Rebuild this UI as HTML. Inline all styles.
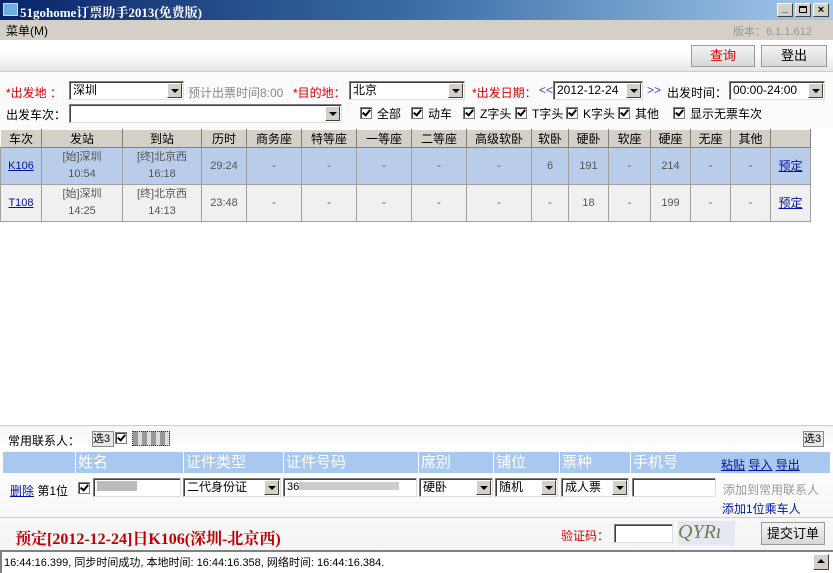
<!DOCTYPE html>
<html><head><meta charset="utf-8"><style>
*{box-sizing:border-box;margin:0;padding:0}
body{width:833px;height:573px;overflow:hidden;position:relative;background:#fff;font:12px "Liberation Sans","Noto Sans CJK SC",sans-serif;color:#000}
.a{position:absolute;white-space:nowrap}
.red{color:#d40000}
.combo{position:absolute;height:19px;background:#fff;border:1px solid #7f7f7f;border-right-color:#ddd;border-bottom-color:#ddd;box-shadow:inset 1px 1px 0 #404040;padding:1px 3px;font-size:12px;line-height:15px}
.combo .b{position:absolute;right:1px;top:1px;width:15px;height:15px;background:#d4d0c8;border:1px solid;border-color:#fff #404040 #404040 #fff}
.combo .b:after{content:"";position:absolute;left:3px;top:5px;border:4px solid transparent;border-top:4px solid #000;border-bottom:0}
.cb{position:absolute;width:12px;height:12px;border:1px solid #808080;background:#fff;box-shadow:inset 1px 1px 0 #404040}
.cb:after{content:"";position:absolute;left:3px;top:0px;width:3px;height:6px;border:solid #000;border-width:0 2px 2px 0;transform:rotate(40deg)}
.btn{position:absolute;background:linear-gradient(#f4f4f4,#d8d8d8);border:1px solid #9a9a9a;text-align:center;font-size:13px}
table{border-collapse:collapse;position:absolute;left:0;top:129px;table-layout:fixed;width:833px}
th{background:#d4d0c8;font-weight:normal;height:17px;border:1px solid;border-color:#fff #808080 #808080 #fff;font-size:12px;padding:0}
td{border:1px solid #a0a0a0;text-align:center;color:#555;font-size:11px;height:37px;line-height:17px;padding:0}
tr.s td{background:#b9cdeb}
tr.n td{background:#f0f0f0}
td.e{background:#fff!important;border:0}
a,.lk{color:#00159a;text-decoration:underline}
.hb{position:absolute;top:452px;height:21px;background:#a9c8ef;color:#fff;font-size:15px;line-height:21px;border-left:1px solid #fff;padding-left:2px}
</style></head><body>
<div class="a" style="left:0;top:0;width:833px;height:20px;background:linear-gradient(90deg,#0a246a,#3a6ea5 50%,#a6caf0)"></div>
<div class="a" style="left:3px;top:3px;width:15px;height:13px;background:#6ab0e0;border:1px solid #cde"></div>
<div class="a" style="left:20px;top:2px;color:#fff;font:bold 13px 'Liberation Serif','Noto Serif CJK SC',serif">51gohome订票助手2013(免费版)</div>
<div class="a" style="left:777px;top:3px;width:16px;height:14px;background:#d4d0c8;border:1px solid;border-color:#fff #404040 #404040 #fff;font-size:10px;line-height:10px;text-align:center;font-weight:bold">_</div>
<div class="a" style="left:795px;top:3px;width:16px;height:14px;background:#d4d0c8;border:1px solid;border-color:#fff #404040 #404040 #fff"><div style="margin:2px 3px;width:8px;height:7px;border:1px solid #000;border-top-width:2px"></div></div>
<div class="a" style="left:813px;top:3px;width:16px;height:14px;background:#d4d0c8;border:1px solid;border-color:#fff #404040 #404040 #fff;font:bold 11px/12px 'Liberation Sans';text-align:center">×</div>
<div class="a" style="left:0;top:20px;width:833px;height:20px;background:#d4d0c8"></div>
<div class="a" style="left:6px;top:22px;font-size:12px">菜单(M)</div>
<div class="a" style="left:733px;top:23px;color:#999;font-size:11px">版本：6.1.1.612</div>
<div class="a" style="left:0;top:40px;width:833px;height:32px;background:linear-gradient(#fff,#fff 40%,#e6e6e6);border-bottom:1px solid #ccc"></div>
<div class="btn" style="left:691px;top:45px;width:64px;height:22px;line-height:20px;color:#d40000">查询</div>
<div class="btn" style="left:761px;top:45px;width:66px;height:22px;line-height:20px">登出</div>
<div class="a" style="left:0;top:73px;width:833px;height:56px;background:#fbfbfb"></div>
<div class="a red" style="left:6px;top:84px">*出发地 ：</div>
<div class="combo" style="left:69px;top:81px;width:115px">深圳<div class="b"></div></div>
<div class="a" style="left:188px;top:84px;color:#888;font-size:12px">预计出票时间8:00</div>
<div class="a red" style="left:293px;top:84px">*目的地：</div>
<div class="combo" style="left:349px;top:81px;width:116px">北京<div class="b"></div></div>
<div class="a red" style="left:472px;top:84px">*出发日期：</div>
<div class="a" style="left:539px;top:83px;color:#3050c0">&lt;&lt;</div>
<div class="combo" style="left:553px;top:81px;width:90px">2012-12-24<div class="b"></div></div>
<div class="a" style="left:647px;top:83px;color:#3050c0">&gt;&gt;</div>
<div class="a" style="left:667px;top:84px">出发时间：</div>
<div class="combo" style="left:729px;top:81px;width:96px">00:00-24:00<div class="b"></div></div>
<div class="a" style="left:6px;top:106px">出发车次：</div>
<div class="combo" style="left:69px;top:104px;width:273px"><div class="b"></div></div>
<div class="cb" style="left:360px;top:107px"></div><div class="a" style="left:377px;top:105px">全部</div>
<div class="cb" style="left:411px;top:107px"></div><div class="a" style="left:428px;top:105px">动车</div>
<div class="cb" style="left:463px;top:107px"></div><div class="a" style="left:480px;top:105px">Z字头</div>
<div class="cb" style="left:515px;top:107px"></div><div class="a" style="left:532px;top:105px">T字头</div>
<div class="cb" style="left:566px;top:107px"></div><div class="a" style="left:583px;top:105px">K字头</div>
<div class="cb" style="left:618px;top:107px"></div><div class="a" style="left:635px;top:105px">其他</div>
<div class="cb" style="left:673px;top:107px"></div><div class="a" style="left:690px;top:105px">显示无票车次</div>
<table>
<colgroup><col style="width:41px"><col style="width:81px"><col style="width:79px"><col style="width:45px"><col style="width:55px"><col style="width:55px"><col style="width:55px"><col style="width:55px"><col style="width:65px"><col style="width:37px"><col style="width:40px"><col style="width:42px"><col style="width:40px"><col style="width:40px"><col style="width:40px"><col style="width:40px"><col style="width:23px"></colgroup>
<tr><th>车次</th><th>发站</th><th>到站</th><th>历时</th><th>商务座</th><th>特等座</th><th>一等座</th><th>二等座</th><th>高级软卧</th><th>软卧</th><th>硬卧</th><th>软座</th><th>硬座</th><th>无座</th><th>其他</th><th></th><th style="border:0;background:#fff"></th></tr>
<tr class="s"><td><a>K106</a></td><td>[始]深圳<br>10:54</td><td>[终]北京西<br>16:18</td><td>29:24</td><td>-</td><td>-</td><td>-</td><td>-</td><td>-</td><td>6</td><td>191</td><td>-</td><td>214</td><td>-</td><td>-</td><td style="font-size:12px"><a>预定</a></td><td class="e"></td></tr>
<tr class="n"><td><a>T108</a></td><td>[始]深圳<br>14:25</td><td>[终]北京西<br>14:13</td><td>23:48</td><td>-</td><td>-</td><td>-</td><td>-</td><td>-</td><td>-</td><td>18</td><td>-</td><td>199</td><td>-</td><td>-</td><td style="font-size:12px"><a>预定</a></td><td class="e"></td></tr>
</table>
<div class="a" style="left:0;top:425px;width:833px;height:125px;background:linear-gradient(#f6f6f6,#fff 20%,#f4f4f4);border-top:1px solid #ccc"></div>
<div class="a" style="left:8px;top:432px;font-size:12px">常用联系人：</div>
<div class="a" style="left:92px;top:431px;width:22px;height:16px;background:#e8e8e8;border:1px solid #888;font-size:11px;line-height:14px">选3</div>
<div class="cb" style="left:115px;top:432px"></div>
<div class="a" style="left:132px;top:431px;width:38px;height:15px;border:1px dotted #333;background:repeating-linear-gradient(90deg,#999 0 5px,#ddd 5px 9px)"></div>
<div class="a" style="left:803px;top:431px;width:21px;height:16px;background:#e8e8e8;border:1px solid #888;font-size:11px;line-height:14px">选3</div>
<div class="a" style="left:3px;top:452px;width:827px;height:21px;background:#a9c8ef"></div>
<div class="hb" style="left:75px;width:108px">姓名</div>
<div class="hb" style="left:183px;width:100px">证件类型</div>
<div class="hb" style="left:283px;width:135px">证件号码</div>
<div class="hb" style="left:418px;width:75px">席别</div>
<div class="hb" style="left:493px;width:66px">铺位</div>
<div class="hb" style="left:559px;width:71px">票种</div>
<div class="hb" style="left:630px;width:88px">手机号</div>
<div class="a" style="left:721px;top:456px;font-size:12px"><a>粘贴</a> <a>导入</a> <a>导出</a></div>
<div class="a" style="left:10px;top:482px"><a>删除</a> 第1位</div>
<div class="cb" style="left:78px;top:482px"></div>
<div class="combo" style="left:93px;top:478px;width:88px"><span style="display:inline-block;width:40px;height:10px;background:#bbb"></span></div>
<div class="combo" style="left:183px;top:478px;width:98px">二代身份证<div class="b"></div></div>
<div class="combo" style="left:283px;top:478px;width:134px;font-size:11px">36<span style="display:inline-block;width:100px;height:8px;background:#ccc"></span></div>
<div class="combo" style="left:419px;top:478px;width:74px">硬卧<div class="b"></div></div>
<div class="combo" style="left:495px;top:478px;width:63px">随机<div class="b"></div></div>
<div class="combo" style="left:561px;top:478px;width:68px">成人票<div class="b"></div></div>
<div class="combo" style="left:632px;top:478px;width:84px"></div>
<div class="a" style="left:723px;top:481px;color:#999">添加到常用联系人</div>
<div class="a" style="left:722px;top:500px;color:#00159a">添加1位乘车人</div>
<div class="a" style="left:0;top:517px;width:833px;height:1px;background:#ccc"></div>
<div class="a" style="left:15px;top:526px;color:#c00000;font:bold 16px 'Liberation Serif','Noto Serif CJK SC',serif">预定[2012-12-24]日K106(深圳-北京西)</div>
<div class="a red" style="left:561px;top:527px">验证码：</div>
<div class="combo" style="left:614px;top:524px;width:59px"></div>
<div class="a" style="left:678px;top:521px;width:57px;height:24px;background:#e4e8f0;color:#7a7a50;font:italic 20px/22px 'Liberation Serif',serif">QYRı</div>
<div class="btn" style="left:761px;top:522px;width:64px;height:23px;line-height:21px">提交订单</div>
<div class="a" style="left:0;top:550px;width:833px;height:23px;background:#fff;border-top:2px solid #808080;border-left:2px solid #808080"></div>
<div class="a" style="left:4px;top:554px;font-size:11px">16:44:16.399, 同步时间成功, 本地时间: 16:44:16.358, 网络时间: 16:44:16.384.</div>
<div class="a" style="left:813px;top:554px;width:16px;height:16px;background:#d4d0c8;border:1px solid;border-color:#fff #404040 #404040 #fff"><div style="margin:4px 3px;border:4px solid transparent;border-bottom:4px solid #000;border-top:0;width:0"></div></div>
</body></html>
